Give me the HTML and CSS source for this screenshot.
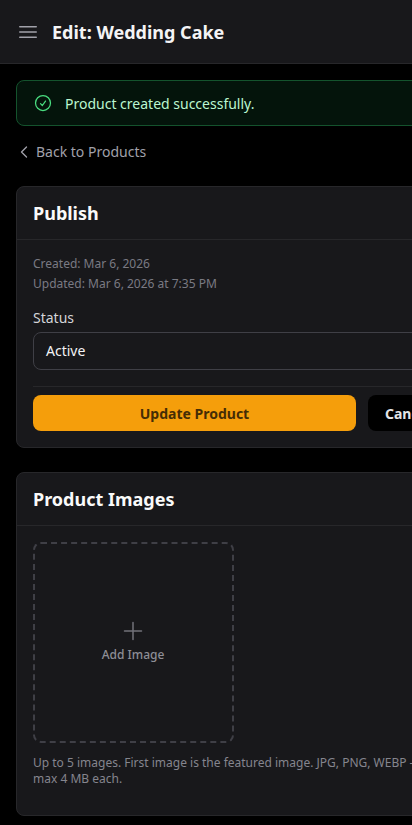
FILE: index.html
```html
<!DOCTYPE html>
<html lang="en">
<head>
<meta charset="utf-8">
<title>Edit: Wedding Cake</title>
<link rel="stylesheet" href="styles.css">
</head>
<body>
<header class="topbar">
  <svg class="menu-icon" width="24" height="24" viewBox="0 0 24 24" fill="none" stroke="currentColor" stroke-width="1.5" stroke-linecap="round"><path d="M3.75 6.75h16.5M3.75 12h16.5M3.75 17.25h16.5"/></svg>
  <h1 class="page-title">Edit: Wedding Cake</h1>
</header>
<main class="content">
  <div class="alert">
    <svg class="alert-icon" width="20" height="20" viewBox="0 0 24 24" fill="none" stroke="currentColor" stroke-width="1.5" stroke-linecap="round" stroke-linejoin="round"><path d="M9 12.75 11.25 15 15 9.75"/><circle cx="12" cy="12" r="9"/></svg>
    <span>Product created successfully.</span>
  </div>
  <a class="back-link" href="#">
    <svg width="16" height="16" viewBox="0 0 24 24" fill="none" stroke="currentColor" stroke-width="2" stroke-linecap="round" stroke-linejoin="round"><path d="M15.75 19.5 8.25 12l7.5-7.5"/></svg>
    <span>Back to Products</span>
  </a>
  <section class="card">
    <h2 class="card-title">Publish</h2>
    <div class="card-body">
      <div class="meta">
        <p>Created: Mar 6, 2026</p>
        <p>Updated: Mar 6, 2026 at 7:35 PM</p>
      </div>
      <label class="field-label">Status</label>
      <div class="select">Active</div>
      <div class="actions">
        <button class="btn btn-primary">Update Product</button>
        <button class="btn btn-dark">Cancel</button>
      </div>
    </div>
  </section>
  <section class="card">
    <h2 class="card-title">Product Images</h2>
    <div class="card-body images-body">
      <div class="dropzone">
        <svg width="24" height="24" viewBox="0 0 24 24" fill="none" stroke="currentColor" stroke-width="1.5" stroke-linecap="round" stroke-linejoin="round"><path d="M12 3.5v17M3.5 12h17"/></svg>
        <span>Add Image</span>
      </div>
      <p class="hint">Up to 5 images. First image is the featured image. JPG, PNG, WEBP —<br>max 4 MB each.</p>
    </div>
  </section>
</main>
</body>
</html>
```
FILE: styles.css
```css
* { box-sizing: border-box; margin: 0; padding: 0; }
html, body { width: 412px; height: 825px; overflow: hidden; background: #000; }
body { font-family: "Noto Sans", sans-serif; color: #fafafa; }
.topbar {
  height: 64px; width: 412px; display: flex; align-items: center; gap: 12px;
  padding: 0 16px; background: #18181b; border-bottom: 1px solid #27272a;
}
.menu-icon { color: #a1a1aa; flex: none; }
.page-title { font-size: 18px; font-weight: 700; line-height: 28px; color: #f4f4f5; }
.content { width: 640px; padding: 16px 16px 0; }
.alert {
  height: 46px; display: flex; align-items: center; gap: 12px; padding: 0 16px;
  background: #04140b; border: 1px solid #14532d; border-radius: 8px;
  font-size: 14px; color: #bbf7d0;
}
.alert-icon { color: #4ade80; flex: none; }
.back-link {
  display: flex; align-items: center; gap: 4px; margin-top: 16px; height: 20px;
  font-size: 14px; line-height: 20px; color: #a1a1aa; text-decoration: none;
}
.card { margin-top: 24px; background: #18181b; border: 1px solid #27272a; border-radius: 8px; }
.card-title {
  height: 53px; padding: 0 16px; display: flex; align-items: center;
  font-size: 18px; font-weight: 700; color: #fafafa; border-bottom: 1px solid #27272a;
}
.card-body { padding: 16px; }
.meta { display: flex; flex-direction: column; gap: 4px; font-size: 12px; line-height: 16px; color: #7a7a83; }
.field-label { display: block; margin-top: 16px; font-size: 14px; line-height: 20px; color: #d4d4d8; }
.select {
  margin-top: 4px; height: 38px; display: flex; align-items: center; padding: 0 12px 2px;
  font-size: 14px; color: #f4f4f5; background: #18181b; border: 1px solid #3f3f46; border-radius: 8px;
}
.actions { margin-top: 16px; padding-top: 8px; border-top: 1px solid #27272a; display: flex; gap: 12px; }
.btn { height: 36px; border: 0; border-radius: 8px; font-family: inherit; font-size: 14px; font-weight: 700; }
.btn-primary { flex: none; width: 323px; background: #f59e0b; color: #452d05; }
.btn-dark { flex: none; padding: 0 17px; background: #000; color: #e4e4e7; }
.images-body { padding-bottom: 28px; }
.dropzone {
  width: 201px; height: 201px; display: flex; flex-direction: column; align-items: center; justify-content: center;
  padding-right: 1px; border: 2px dashed #3f3f46; border-radius: 8px; color: #71717a;
}
.dropzone span { font-size: 12px; font-weight: 500; line-height: 16px; color: #8e8e96; margin-top: 4px; margin-bottom: 4px; }
.hint { margin-top: 12px; font-size: 12px; line-height: 16px; color: #85858e; }
```
